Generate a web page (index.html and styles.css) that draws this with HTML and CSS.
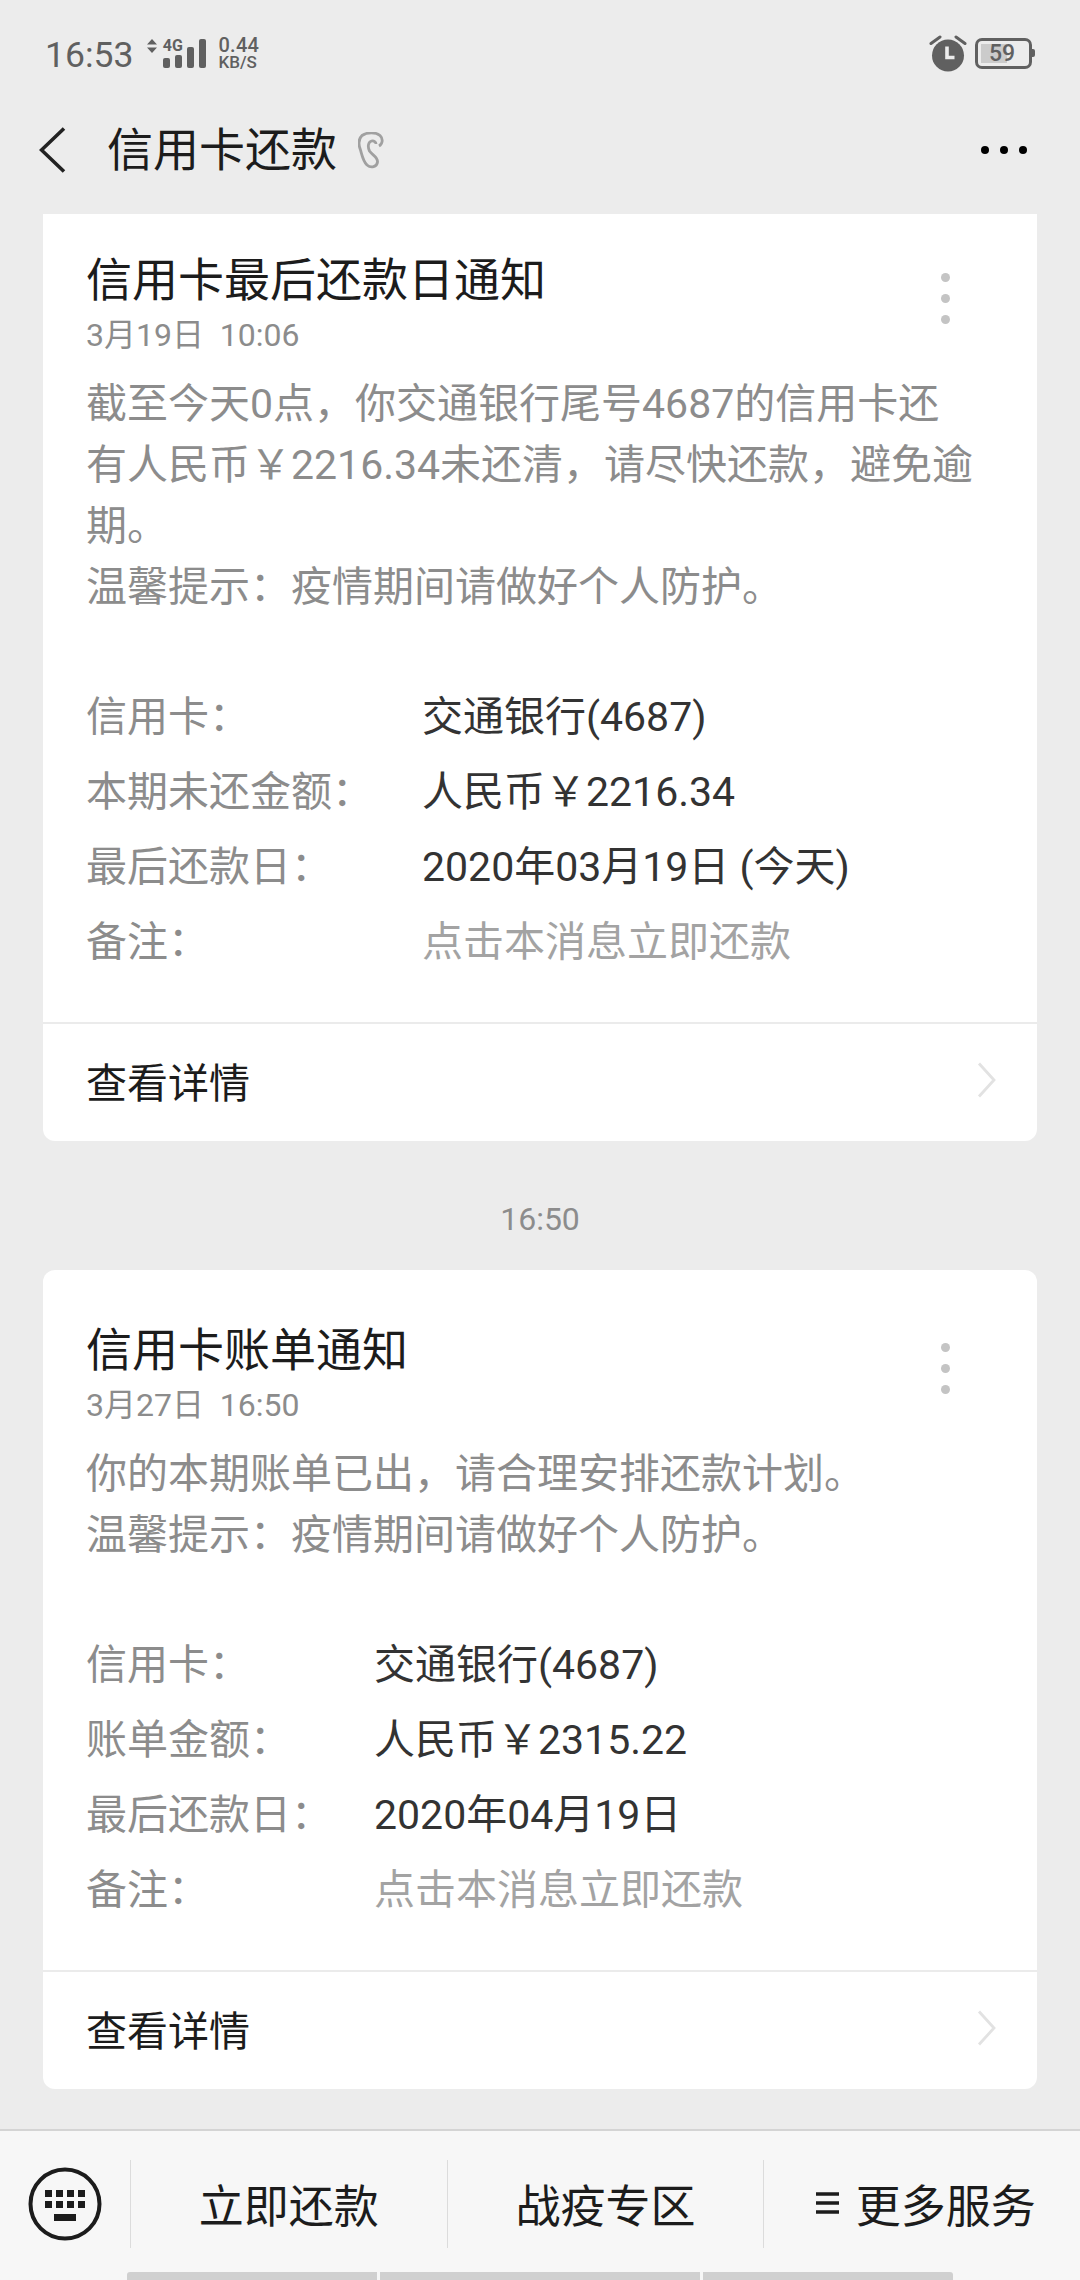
FILE: index.html
```html
<!DOCTYPE html>
<html lang="zh-CN">
<head>
    <meta charset="UTF-8">
    <meta name="viewport" content="width=device-width, initial-scale=1.0">
    <title>信用卡还款</title>
    <link rel="stylesheet" href="styles.css">
</head>

<body>
    <div class="status-bar">
        <div class="status-left">
            <span class="clock">16:53</span>
            <svg class="updown" width="10" height="14" viewBox="0 0 10 14"><path d="M5 0 10 5.500H0zM5 14 0 8.500H10z" fill="#606060"/></svg>
            <div class="signal">
                <span class="net-type">4G</span>
                <div class="bar-wrap">
                    <i class="bar bar-1"></i>
                    <i class="bar bar-2"></i>
                </div>
            </div>
            <i class="bar bar-3"></i>
            <i class="bar bar-4"></i>
            <div class="speed">
                <span class="speed-num">0.44</span>
                <span class="speed-unit">KB/S</span>
            </div>
        </div>
        <div class="status-right">
            <svg width="38" height="38" viewBox="0 0 38 38">
                <circle cx="19" cy="21.500" r="16" fill="#606060"/>
                <path d="M2 9.500 11 3M36 9.500 27 3" stroke="#606060" stroke-width="3" stroke-linecap="round" fill="none"/>
                <path d="M18 12.500V23.500H25.500" stroke="#ececec" stroke-width="3.600" fill="none"/>
            </svg>
            <div class="battery">
                <div class="battery-fill"></div>
                <span class="battery-num">59</span>
                <i class="battery-tip"></i>
            </div>
        </div>
    </div>

    <div class="nav">
        <svg class="back" width="27" height="46" viewBox="0 0 27 46"><path d="M25 1.500 2.500 23 25 44.500" stroke="#222" stroke-width="3.600" fill="none"/></svg>
        <h1 class="nav-title">信用卡还款</h1>
        <svg class="ear" width="26" height="37" viewBox="0 0 26 37" fill="none" stroke="#a0a0a0" stroke-width="2.800">
            <path d="M21 14C24.500 12 25.500 7 22 3.500 18 0 9 0 4 3.500 .5 7 .5 13 2.500 18 4 23 5 29 9 33 13 36.500 19 35 19.500 30 20 25 14 23 11.500 19 9.500 15 10 10 13.500 9 16 8.500 18 10 18 12"/>
        </svg>
        <div class="nav-more"><i></i><i></i><i></i></div>
    </div>

    <div class="list">
        <div class="card card-first">
            <div class="card-main">
                <div class="card-head">
                    <div>
                        <h2 class="card-title">信用卡最后还款日通知</h2>
                        <p class="card-date">3月19日&nbsp;&nbsp;10:06</p>
                    </div>
                    <div class="card-dots"><i></i><i></i><i></i></div>
                </div>
                <p class="card-text">截至今天0点，你交通银行尾号4687的信用卡还<br>有人民币￥2216.34未还清，请尽快还款，避免逾<br>期。<br>温馨提示：疫情期间请做好个人防护。</p>
                <div class="rows rows-wide">
                    <span class="row-label">信用卡：</span><span class="row-value">交通银行(4687)</span>
                    <span class="row-label">本期未还金额：</span><span class="row-value">人民币￥2216.34</span>
                    <span class="row-label">最后还款日：</span><span class="row-value">2020年03月19日 (今天)</span>
                    <span class="row-label">备注：</span><span class="row-value row-muted">点击本消息立即还款</span>
                </div>
            </div>
            <div class="card-foot">
                <span>查看详情</span>
                <svg width="20" height="36" viewBox="0 0 20 36"><path d="M2 1.500 17 18 2 34.500" stroke="#e2e2e2" stroke-width="2.800" fill="none"/></svg>
            </div>
        </div>

        <div class="time">16:50</div>

        <div class="card">
            <div class="card-main">
                <div class="card-head">
                    <div>
                        <h2 class="card-title">信用卡账单通知</h2>
                        <p class="card-date">3月27日&nbsp;&nbsp;16:50</p>
                    </div>
                    <div class="card-dots"><i></i><i></i><i></i></div>
                </div>
                <p class="card-text">你的本期账单已出，请合理安排还款计划。<br>温馨提示：疫情期间请做好个人防护。</p>
                <div class="rows">
                    <span class="row-label">信用卡：</span><span class="row-value">交通银行(4687)</span>
                    <span class="row-label">账单金额：</span><span class="row-value">人民币￥2315.22</span>
                    <span class="row-label">最后还款日：</span><span class="row-value">2020年04月19日</span>
                    <span class="row-label">备注：</span><span class="row-value row-muted">点击本消息立即还款</span>
                </div>
            </div>
            <div class="card-foot">
                <span>查看详情</span>
                <svg width="20" height="36" viewBox="0 0 20 36"><path d="M2 1.500 17 18 2 34.500" stroke="#e2e2e2" stroke-width="2.800" fill="none"/></svg>
            </div>
        </div>
    </div>

    <div class="bottom-bar">
        <div class="menu">
            <div class="menu-key">
                <svg width="74" height="74" viewBox="0 0 74 74">
                    <circle cx="37" cy="37" r="34.500" stroke="#1c1c1c" stroke-width="4" fill="none"/>
                    <path d="M17 23h7v7h-7zM28 23h7v7h-7zM39 23h7v7h-7zM50 23h7v7h-7zM17 34h7v7h-7zM28 34h7v7h-7zM39 34h7v7h-7zM50 34h7v7h-7zM26 47h22v7H26z" fill="#1c1c1c"/>
                </svg>
            </div>
            <div class="menu-item">立即还款</div>
            <div class="menu-item">战疫专区</div>
            <div class="menu-item">
                <svg class="menu-lines" width="23" height="22" viewBox="0 0 23 22"><path d="M0 2h23M0 11h23M0 20h23" stroke="#1c1c1c" stroke-width="3.500"/></svg>
                更多服务
            </div>
        </div>
        <div class="scroll-marks"><i></i><i></i><i></i></div>
    </div>
</body>

</html>
```

FILE: styles.css
```css
* {
    box-sizing: border-box;
}

body {
    font-family: Roboto, "Noto Sans CJK SC", sans-serif;
    background-color: #ececec;
    margin: 0;
    padding: 0;
    width: 1080px;
    height: 2280px;
    display: flex;
    flex-direction: column;
    overflow: hidden;
}

h1,
h2,
p {
    margin: 0;
    font-weight: normal;
}

i {
    display: block;
}

/* status bar */
.status-bar {
    height: 100px;
    flex-shrink: 0;
    padding: 0 48px 0 45px;
    display: flex;
    justify-content: space-between;
    align-items: center;
    color: #606060;
}

.status-left {
    display: flex;
    align-items: flex-end;
    height: 32px;
    margin-top: 4px;
}

.clock {
    font-size: 35.500px;
    line-height: 32px;
    margin-right: 14px;
    margin-bottom: -3px;
}

.updown {
    align-self: flex-start;
    margin-right: 6px;
    margin-top: 3px;
}

.signal {
    width: 19px;
    margin-right: 5px;
    display: flex;
    flex-direction: column;
    align-items: center;
}

.net-type {
    font-size: 16px;
    line-height: 13px;
    font-weight: 700;
    margin-bottom: 3px;
}

.bar-wrap {
    display: flex;
    align-items: flex-end;
    gap: 5px;
}

.bar {
    width: 7px;
    background-color: #606060;
    border-radius: 2px;
}

.bar-1 {
    height: 10px;
}

.bar-2 {
    height: 13px;
}

.bar-3 {
    height: 21px;
    margin-right: 5px;
}

.bar-4 {
    height: 29px;
    margin-right: 12px;
}

.speed {
    display: flex;
    flex-direction: column;
    margin-bottom: -2px;
}

.speed-num {
    font-size: 20px;
    line-height: 20px;
    font-weight: 500;
    letter-spacing: 0.3px;
}

.speed-unit {
    font-size: 17px;
    line-height: 15px;
    font-weight: 500;
}

.status-right {
    display: flex;
    align-items: center;
    gap: 8px;
    margin-top: 6px;
}

.battery {
    width: 57px;
    height: 31px;
    border: 3px solid #606060;
    border-radius: 7px;
    position: relative;
    display: flex;
    align-items: center;
    justify-content: center;
}

.battery-fill {
    position: absolute;
    left: 3px;
    top: 3px;
    bottom: 3px;
    width: 26px;
    background-color: #cbcbcb;
}

.battery-num {
    position: relative;
    font-size: 23px;
    font-weight: 500;
    margin-right: 3px;
}

.battery-tip {
    position: absolute;
    right: -6px;
    top: 8px;
    width: 3px;
    height: 8px;
    background-color: #606060;
    border-radius: 0 2px 2px 0;
}

/* title bar */
.nav {
    height: 114px;
    flex-shrink: 0;
    padding: 0 53px 14px 39px;
    display: flex;
    align-items: center;
}

.back {
    margin-right: 41px;
}

.nav-title {
    font-size: 46px;
    line-height: 70px;
    color: #1c1c1c;
    margin-right: 21px;
}

.ear {
    margin-right: auto;
}

.nav-more {
    display: flex;
    gap: 11px;
}

.nav-more i {
    width: 8px;
    height: 8px;
    border-radius: 50%;
    background-color: #000;
}

/* messages */
.list {
    flex: 1;
    min-height: 0;
    overflow: hidden;
    padding: 0 43px;
}

.card {
    background-color: #fff;
    border-radius: 12px;
}

.card-first {
    margin-top: -14px;
}

.card-main {
    padding: 50px 44px 47px 43px;
}

.card-head {
    display: flex;
    justify-content: space-between;
    align-items: flex-start;
}

.card-title {
    font-size: 46px;
    line-height: 60px;
    color: #1c1c1c;
}

.card-date {
    font-size: 32px;
    line-height: 40px;
    margin-top: 5px;
    color: #8c8c8c;
}

.card-dots {
    display: flex;
    flex-direction: column;
    gap: 12px;
    margin-top: 23px;
    margin-right: 43px;
}

.card-dots i {
    width: 9px;
    height: 9px;
    border-radius: 50%;
    background-color: #c4c4c4;
}

.card-text {
    font-size: 41px;
    line-height: 61px;
    margin-top: 19px;
    margin-bottom: 57px;
    color: #8c8c8c;
}

.rows {
    display: grid;
    grid-template-columns: 288px 1fr;
    grid-auto-rows: 75px;
    align-items: center;
    font-size: 41px;
}

.rows-wide {
    grid-template-columns: 336px 1fr;
}

.row-label {
    color: #8c8c8c;
}

.row-value {
    color: #333;
}

.row-value.row-muted {
    color: #a3a3a3;
}

.card-foot {
    height: 119px;
    border-top: 2px solid #ebebeb;
    padding: 0 40px 5px 43px;
    display: flex;
    align-items: center;
    justify-content: space-between;
    font-size: 41px;
    color: #1c1c1c;
}

.time {
    height: 129px;
    padding-top: 58px;
    text-align: center;
    font-size: 32px;
    line-height: 40px;
    color: #8c8c8c;
}

/* bottom menu */
.bottom-bar {
    height: 151px;
    flex-shrink: 0;
    background-color: #f7f7f7;
    border-top: 2px solid #d4d4d4;
    display: flex;
    flex-direction: column;
}

.menu {
    margin-top: 29px;
    height: 88px;
    display: flex;
}

.menu-key {
    width: 130px;
    padding-left: 28px;
    display: flex;
    align-items: center;
}

.menu-item {
    flex: 1;
    border-left: 1px solid #dcdcdc;
    display: flex;
    align-items: center;
    justify-content: center;
    font-size: 45px;
    padding-bottom: 2px;
    color: #1c1c1c;
}

.menu-lines {
    margin-left: 7px;
    margin-right: 17px;
}

.scroll-marks {
    margin-top: 24px;
    padding-left: 127px;
    display: flex;
    gap: 3px;
}

.scroll-marks i {
    height: 8px;
    width: 250px;
    background-color: #d0d0d0;
    border-radius: 3px 0 0 0;
}

.scroll-marks i:nth-child(2) {
    width: 320px;
    border-radius: 0;
}

.scroll-marks i:nth-child(3) {
    border-radius: 0 3px 0 0;
}
```
